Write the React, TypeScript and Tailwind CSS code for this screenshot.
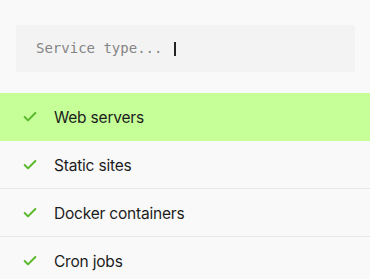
import { Check } from 'lucide-react'

const services = ['Web servers', 'Static sites', 'Docker containers', 'Cron jobs']

export default function App() {
  return (
    <div className="min-h-screen w-full bg-[#f9f9f9] pt-[25px] font-['Inter',sans-serif]">
      {/* Search field */}
      <div className="mx-4 flex h-[47px] w-[339px] items-center bg-[#f3f3f3] pl-5">
        <span className="font-['DejaVu_Sans_Mono',monospace] text-[14px] text-[#858585]">Service type...</span>
        <span className="ml-[12px] h-[14px] w-[1.5px] bg-[#222]" />
      </div>

      {/* Options */}
      <ul className="mt-[21px]">
        {services.map((name, i) => (
          <li
            key={name}
            className={
              'flex h-[48px] items-center gap-[16px] border-b pl-[22px] ' +
              (i === 0 ? 'border-[#c6ff98] bg-[#c6ff98]' : 'border-[#e6e6e6]')
            }
          >
            <Check className="h-[16px] w-[16px] text-[#5bb92c]" strokeWidth={3} />
            <span className="pt-[2px] text-[15.5px] tracking-[-0.2px] text-[#1c1c1c]">{name}</span>
          </li>
        ))}
      </ul>
    </div>
  )
}
